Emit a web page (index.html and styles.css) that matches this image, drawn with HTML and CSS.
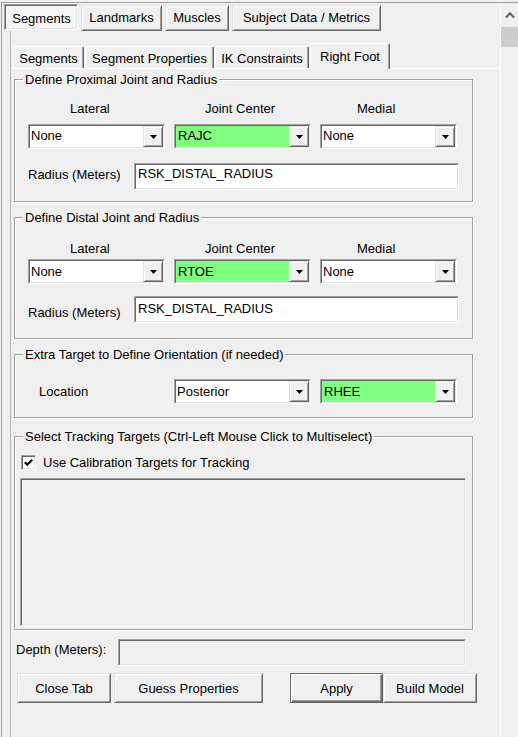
FILE: index.html
```html
<!DOCTYPE html>
<html>
<head>
<meta charset="utf-8">
<title>Segments</title>
<link rel="stylesheet" href="styles.css">
</head>
<body>
<div class="frame">
  <div class="main">
    <div class="outer-tabs">
      <div class="otab otab-active ow-seg">Segments</div>
      <div class="otab ow-land">Landmarks</div>
      <div class="otab ow-mus">Muscles</div>
      <div class="otab ow-subj">Subject Data / Metrics</div>
    </div>
    <div class="page">
      <div class="inner-tabs">
        <div class="itab iw-seg">Segments</div>
        <div class="itab iw-prop">Segment Properties</div>
        <div class="itab iw-ik">IK Constraints</div>
        <div class="itab itab-active iw-rf">Right Foot</div>
      </div>
      <div class="page-body">
        <div class="group g1">
          <div class="group-title">Define Proximal Joint and Radius</div>
          <div class="joint-row">
            <div class="col">
              <div class="col-label lbl-lat">Lateral</div>
              <div class="combo"><div class="combo-in"><span class="combo-text">None</span><span class="drop"><svg width="7" height="4" viewBox="0 0 7 4"><path d="M0 0H7L3.5 4Z" fill="#000"/></svg></span></div></div>
            </div>
            <div class="col">
              <div class="col-label lbl-jc">Joint Center</div>
              <div class="combo"><div class="combo-in green"><span class="combo-text">RAJC</span><span class="drop"><svg width="7" height="4" viewBox="0 0 7 4"><path d="M0 0H7L3.5 4Z" fill="#000"/></svg></span></div></div>
            </div>
            <div class="col">
              <div class="col-label lbl-med">Medial</div>
              <div class="combo"><div class="combo-in"><span class="combo-text">None</span><span class="drop"><svg width="7" height="4" viewBox="0 0 7 4"><path d="M0 0H7L3.5 4Z" fill="#000"/></svg></span></div></div>
            </div>
          </div>
          <div class="radius-row">
            <span class="radius-label">Radius (Meters)</span>
            <div class="textbox"><div class="textbox-in">RSK_DISTAL_RADIUS</div></div>
          </div>
        </div>

        <div class="group g2">
          <div class="group-title">Define Distal Joint and Radius</div>
          <div class="joint-row">
            <div class="col">
              <div class="col-label lbl-lat">Lateral</div>
              <div class="combo"><div class="combo-in"><span class="combo-text">None</span><span class="drop"><svg width="7" height="4" viewBox="0 0 7 4"><path d="M0 0H7L3.5 4Z" fill="#000"/></svg></span></div></div>
            </div>
            <div class="col">
              <div class="col-label lbl-jc">Joint Center</div>
              <div class="combo"><div class="combo-in green"><span class="combo-text">RTOE</span><span class="drop"><svg width="7" height="4" viewBox="0 0 7 4"><path d="M0 0H7L3.5 4Z" fill="#000"/></svg></span></div></div>
            </div>
            <div class="col">
              <div class="col-label lbl-med">Medial</div>
              <div class="combo"><div class="combo-in"><span class="combo-text">None</span><span class="drop"><svg width="7" height="4" viewBox="0 0 7 4"><path d="M0 0H7L3.5 4Z" fill="#000"/></svg></span></div></div>
            </div>
          </div>
          <div class="radius-row">
            <span class="radius-label">Radius (Meters)</span>
            <div class="textbox"><div class="textbox-in">RSK_DISTAL_RADIUS</div></div>
          </div>
        </div>

        <div class="group g3">
          <div class="group-title">Extra Target to Define Orientation (if needed)</div>
          <div class="loc-row">
            <span class="loc-label">Location</span>
            <div class="combo"><div class="combo-in"><span class="combo-text">Posterior</span><span class="drop"><svg width="7" height="4" viewBox="0 0 7 4"><path d="M0 0H7L3.5 4Z" fill="#000"/></svg></span></div></div>
            <div class="combo"><div class="combo-in green"><span class="combo-text">RHEE</span><span class="drop"><svg width="7" height="4" viewBox="0 0 7 4"><path d="M0 0H7L3.5 4Z" fill="#000"/></svg></span></div></div>
          </div>
        </div>

        <div class="group g4">
          <div class="group-title">Select Tracking Targets (Ctrl-Left Mouse Click to Multiselect)</div>
          <div class="check-row">
            <span class="checkbox"><svg width="11" height="11" viewBox="0 0 11 11"><path d="M1.8 5.2L4.3 7.7L9.2 2.8" fill="none" stroke="#000" stroke-width="2.2"/></svg></span>
            <span class="check-label">Use Calibration Targets for Tracking</span>
          </div>
          <div class="listbox"></div>
        </div>

        <div class="depth-row">
          <span class="depth-label">Depth (Meters):</span>
          <div class="textbox depth-box"><div class="textbox-in"></div></div>
        </div>

        <div class="button-row">
          <div class="btn bw-close">Close Tab</div>
          <div class="btn bw-guess">Guess Properties</div>
          <div class="btn btn-default bw-apply">Apply</div>
          <div class="btn bw-build">Build Model</div>
        </div>
      </div>
    </div>
  </div>
  <div class="scrollbar">
    <div class="sb-up"><svg width="17" height="23" viewBox="0 0 17 23"><path d="M5 14.5L9 10.3L13 14.5" fill="none" stroke="#606060" stroke-width="2"/></svg></div>
    <div class="sb-thumb"></div>
  </div>
</div>
</body>
</html>
```

FILE: styles.css
```css
* { box-sizing: border-box; }
html, body { margin: 0; padding: 0; }
body {
  background: #f0f0f0;
  font-family: "Liberation Sans", Arial, sans-serif;
  font-size: 13px;
  line-height: 15px;
  color: #000;
  width: 518px;
  height: 737px;
  overflow: hidden;
}
.frame {
  margin: 2px 0 0 1px;
  height: 735px;
  border-top: 1px solid #a0a0a0;
  border-left: 1px solid #a0a0a0;
  display: flex;
}
.main { width: 498px; display: flex; flex-direction: column; }

/* outer button-style tabs */
.outer-tabs { display: flex; align-items: flex-start; gap: 3px; padding: 1px 0 0 2px; height: 28px; }
.otab {
  height: 26px;
  margin-top: 1px;
  display: flex; align-items: center; justify-content: center;
  padding-bottom: 1px;
  border: 1px solid; border-color: #e3e3e3 #696969 #696969 #e3e3e3;
  box-shadow: inset 1px 1px 0 #fff, inset -1px -1px 0 #a0a0a0;
  white-space: nowrap;
}
.otab-active {
  margin-top: 0;
  padding: 2px 0 0 1px;
  background: #f6f6f6;
  border-color: #a0a0a0 #fff #fff #a0a0a0;
  box-shadow: inset 1px 1px 0 #696969, inset -1px -1px 0 #e3e3e3;
}
.ow-seg { width: 74px; }
.ow-land { width: 81px; }
.ow-mus { width: 64px; }
.ow-subj { width: 149px; }

/* tab page */
.page {
  flex: 1;
  margin-left: 8px;
  border-left: 1px solid #b4b4b4;
  display: flex; flex-direction: column;
}
.inner-tabs {
  margin-top: 12px;
  height: 26px;
  display: flex; align-items: flex-end; gap: 1px;
  padding-left: 2px;
  border-bottom: 1px solid #fff;
}
.itab {
  height: 22px;
  padding-top: 2px;
  display: flex; align-items: center; justify-content: center;
  border-top: 1px solid #fff; border-left: 1px solid #fff; border-right: 1px solid #696969;
  box-shadow: inset -1px 0 0 #a0a0a0;
  border-radius: 2px 2px 0 0;
  white-space: nowrap;
}
.itab-active { height: 26px; margin-bottom: -1px; padding-top: 0; padding-bottom: 1px; background: #f0f0f0; }
.iw-seg { width: 71px; }
.iw-prop { width: 129px; }
.iw-ik { width: 94px; }
.iw-rf { width: 80px; }

.page-body { padding-left: 3px; }

/* group boxes */
.group {
  width: 459px;
  border: 1px solid #a0a0a0;
  box-shadow: 1px 1px 0 #fff, inset 1px 1px 0 #fff;
}
.group-title {
  width: max-content;
  margin: -8px 0 0 8px;
  padding: 0 2px;
  line-height: 15px;
  background: #f0f0f0;
}
.g1 { margin-top: 10px; padding-bottom: 11px; }
.g2 { margin-top: 15px; padding-bottom: 15px; }
.g3 { margin-top: 15px; padding-bottom: 13px; }
.g4 { margin-top: 18px; padding-bottom: 3px; }

.joint-row { display: flex; gap: 9px; padding-left: 13px; }
.g1 .joint-row { margin-top: 14px; }
.g2 .joint-row { margin-top: 16px; }
.col { width: 137px; }
.col-label { line-height: 15px; }
.g1 .col-label { margin-bottom: 8px; }
.g2 .col-label { margin-bottom: 3px; }
.lbl-lat { padding-left: 42px; }
.lbl-jc { padding-left: 31px; }
.lbl-med { padding-left: 37px; }

/* combo */
.combo {
  width: 137px; height: 25px;
  border: 1px solid; border-color: #a0a0a0 #fff #fff #a0a0a0;
}
.combo-in {
  height: 100%;
  border: 1px solid; border-color: #696969 #e3e3e3 #e3e3e3 #696969;
  background: #fff;
  display: flex;
}
.combo-in.green { background: #80ff80; }
.combo-text { flex: 1; padding: 2px 0 0 1px; white-space: nowrap; }
.green .combo-text { padding-left: 2px; }
.g2 .combo-text, .g3 .combo-text { padding-top: 3px; }
.drop {
  width: 20px;
  background: #f0f0f0;
  border: 1px solid; border-color: #e3e3e3 #696969 #696969 #e3e3e3;
  box-shadow: inset 1px 1px 0 #fff, inset -1px -1px 0 #a0a0a0;
  display: flex; align-items: center; justify-content: center;
}
.drop svg { display: block; margin-top: 1px; }

/* text boxes */
.radius-row { display: flex; align-items: flex-start; padding-left: 13px; }
.g1 .radius-row { margin-top: 14px; }
.g2 .radius-row { margin-top: 12px; }
.radius-label { width: 106px; white-space: nowrap; }
.g1 .radius-label { padding-top: 4px; }
.g2 .radius-label { padding-top: 9px; }
.textbox {
  width: 325px; height: 27px;
  border: 1px solid; border-color: #a0a0a0 #fff #fff #a0a0a0;
}
.textbox-in {
  height: 100%;
  border: 1px solid; border-color: #696969 #e3e3e3 #e3e3e3 #696969;
  background: #fff;
  padding: 1px 0 0 2px;
}
.g2 .textbox-in { padding-top: 3px; }

/* group 3 */
.loc-row { display: flex; align-items: center; gap: 9px; margin-top: 17px; padding-left: 24px; }
.loc-label { width: 126px; }

/* group 4 */
.check-row { display: flex; align-items: center; margin-top: 11px; padding-left: 6px; }
.checkbox {
  width: 15px; height: 15px;
  border: 1px solid; border-color: #a0a0a0 #fff #fff #a0a0a0;
  box-shadow: inset 1px 1px 0 #696969, inset -1px -1px 0 #e3e3e3;
  background: #fff;
  display: flex; align-items: center; justify-content: center;
}
.checkbox svg { display: block; }
.check-label { margin-left: 7px; }
.listbox {
  margin: 8px 0 0 5px;
  width: 446px; height: 148px;
  border: 1px solid; border-color: #a0a0a0 #fff #fff #a0a0a0;
  box-shadow: inset 1px 1px 0 #696969, inset -1px -1px 0 #e3e3e3;
  background: #f0f0f0;
}

/* depth row */
.depth-row { display: flex; align-items: flex-start; margin-top: 9px; padding-left: 2px; }
.depth-label { width: 102px; padding-top: 3px; white-space: nowrap; }
.depth-box { width: 348px; }
.depth-box .textbox-in { background: #f0f0f0; }

/* buttons */
.button-row { display: flex; margin-top: 7px; padding-left: 3px; }
.btn {
  height: 30px;
  display: flex; align-items: center; justify-content: center;
  border: 1px solid; border-color: #e3e3e3 #696969 #696969 #e3e3e3;
  box-shadow: inset 1px 1px 0 #fff, inset -1px -1px 0 #a0a0a0;
  white-space: nowrap;
}
.btn-default {
  border-color: #696969;
  box-shadow: inset 1px 1px 0 #fff, inset -1px -1px 0 #696969, inset -2px -2px 0 #a0a0a0;
}
.bw-close { width: 94px; }
.bw-guess { width: 149px; margin-left: 3px; }
.bw-apply { width: 93px; margin-left: 27px; }
.bw-build { width: 94px; }

/* scrollbar */
.scrollbar {
  width: 18px;
  border-left: 1px solid #fbfbfb;
  display: flex; flex-direction: column;
}
.sb-up { height: 24px; }
.sb-up svg { display: block; }
.sb-thumb { height: 20px; background: #cdcdcd; }
```
